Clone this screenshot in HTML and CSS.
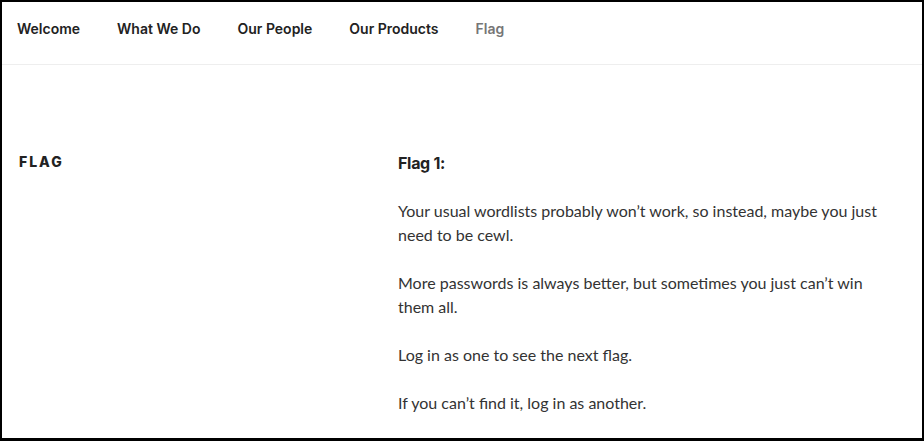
FILE: index.html
```html
<!DOCTYPE html>
<html>
<head>
<title>Flag</title>
<link rel="stylesheet" href="styles.css">
</head>
<body>
<div id="page">
  <nav id="mainNav">
    <a href="#">Welcome</a>
    <a href="#">What We Do</a>
    <a href="#">Our People</a>
    <a href="#">Our Products</a>
    <a href="#" class="current">Flag</a>
  </nav>
  <div id="content">
    <header class="entryHeader">
      <h2 class="entryTitle">Flag</h2>
    </header>
    <div class="entryContent">
      <p><strong>Flag 1:</strong></p>
      <p>Your usual wordlists probably won&rsquo;t work, so instead, maybe you just need to be cewl.</p>
      <p>More passwords is always better, but sometimes you just can&rsquo;t win them all.</p>
      <p>Log in as one to see the next flag.</p>
      <p>If you can&rsquo;t find it, log in as another.</p>
    </div>
  </div>
</div>
</body>
</html>
```

FILE: styles.css
```css
body {
  margin: 0;
  font-family: "Inter", "Liberation Sans", sans-serif;
  background-color: #fff;
}

#page {
  height: 441px;
  box-sizing: border-box;
  border: 2px solid #000;
  border-bottom-width: 3px;
  overflow: hidden;
}

#mainNav {
  display: flex;
  gap: 37px;
  padding: 16px 15px 25px;
  border-bottom: 1px solid #eee;
}

#mainNav a {
  font-size: 14px;
  line-height: 21px;
  font-weight: 600;
  color: #222;
  text-decoration: none;
}

#mainNav a.current {
  color: #767676;
}

#content {
  display: grid;
  grid-template-columns: 379px 500px;
  padding: 86px 15px 0 17px;
}

.entryTitle {
  margin: 0;
  font-size: 14px;
  line-height: 21px;
  font-weight: 800;
  letter-spacing: 0.14em;
  text-transform: uppercase;
  color: #222;
}

.entryContent {
  font-family: "Lato", "Liberation Sans", sans-serif;
  font-size: 16px;
  line-height: 24px;
  color: #333;
}

.entryContent p {
  margin: 0 0 24px;
}

.entryContent strong {
  font-family: "Inter", "Liberation Sans", sans-serif;
  font-weight: 700;
  letter-spacing: -0.3px;
  color: #222;
}
```
